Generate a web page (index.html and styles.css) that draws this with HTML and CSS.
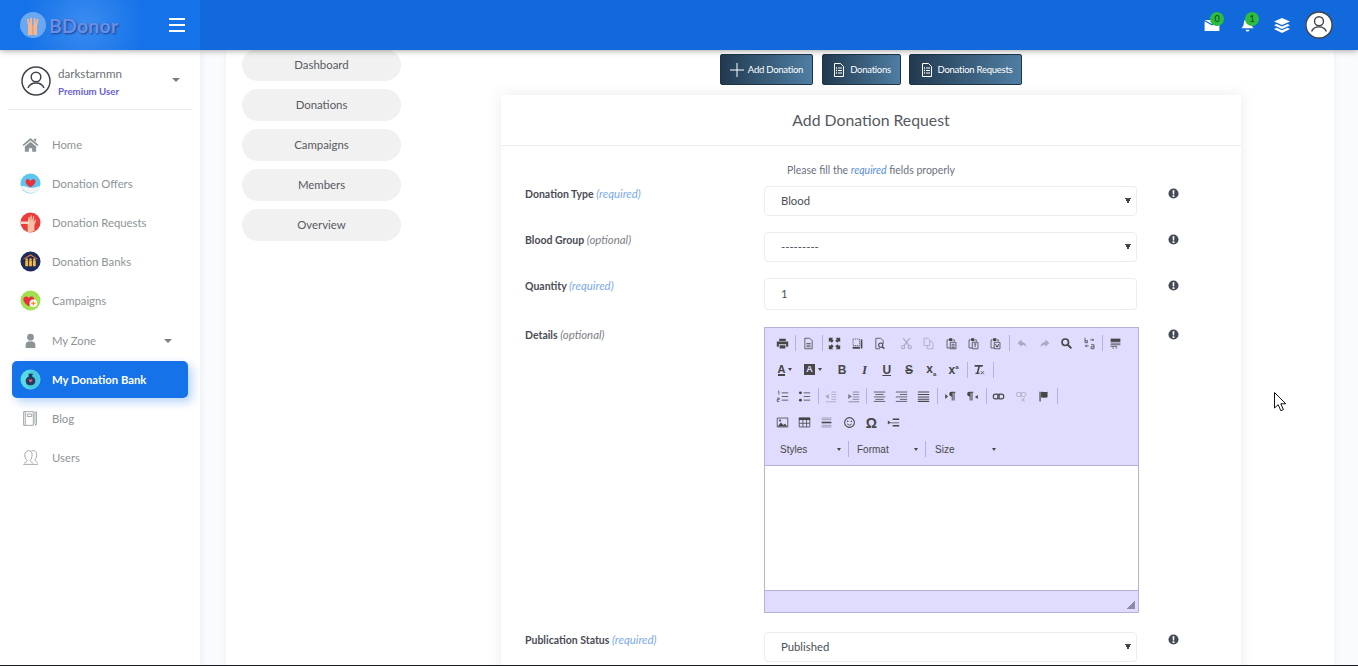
FILE: index.html
```html
<!DOCTYPE html>
<html lang="en">
<head>
  <meta charset="UTF-8" />
  <title>BDonor - Add Donation Request</title>
  <link rel="stylesheet" href="styles.css">
</head>
<body>
  <!-- toolbar icons for the editor -->
  <svg class="defs" width="0" height="0">
    <defs>
      <symbol id="i-print" viewBox="0 0 16 16"><path d="M4 2h8v3H4zM1 5.500h14V12h-2.500V9h-9v3H1zM4.500 10h7v4h-7z"/></symbol>
      <symbol id="i-doc" viewBox="0 0 16 16"><path fill="none" stroke="currentColor" d="M3.500 1.500h6l3 3v10h-9zM5.500 8h5M5.500 10h5M5.500 12h5"/></symbol>
      <symbol id="i-max" viewBox="0 0 16 16"><path d="M1 1h5.500L5 2.500 7 4.500 4.500 7 2.500 5 1 6.500zM15 1v5.500L13.500 5l-2 2L9 4.500l2-2L9.500 1zM1 15V9.500L2.500 11l2-2L7 11.500l-2 2L6.500 15zM15 15H9.500l1.500-1.500-2-2L11.500 9l2 2L15 9.500z"/></symbol>
      <symbol id="i-blocks" viewBox="0 0 16 16"><path fill="none" stroke="currentColor" stroke-dasharray="1.500 1" d="M2.500 2.500h8v8h-8z"/><path d="M2 12h9v2.500H2zM12 3h2v11h-2z"/></symbol>
      <symbol id="i-preview" viewBox="0 0 16 16"><path fill="none" stroke="currentColor" d="M3.500 1.500h6l3 3v4M3.500 1.500v13h5"/><circle cx="9.500" cy="10" r="2.500" fill="none" stroke="currentColor" stroke-width="1.300"/><path stroke="currentColor" stroke-width="1.600" d="M11.500 12l2.500 2.500"/></symbol>
      <symbol id="i-cut" viewBox="0 0 16 16"><path stroke="currentColor" stroke-width="1.400" fill="none" d="M4 1.500l7 9M12 1.500l-7 9"/><circle cx="4" cy="12.500" r="2" fill="none" stroke="currentColor" stroke-width="1.300"/><circle cx="12" cy="12.500" r="2" fill="none" stroke="currentColor" stroke-width="1.300"/></symbol>
      <symbol id="i-copy" viewBox="0 0 16 16"><path fill="none" stroke="currentColor" d="M2.500 1.500h5l2 2v7h-7zM9.500 5.500h2l2 2v7h-7v-4"/></symbol>
      <symbol id="i-paste" viewBox="0 0 16 16"><path fill="none" stroke="currentColor" d="M2.500 3.500h2M9.500 3.500h2v2M2.500 3.500v10h4"/><path d="M5 1.500h4V5H5z"/><path fill="none" stroke="currentColor" d="M6.500 6.500h7v8h-7zM8 9h4M8 11h4M8 13h4"/></symbol>
      <symbol id="i-pastetext" viewBox="0 0 16 16"><path fill="none" stroke="currentColor" d="M2.500 3.500h2M9.500 3.500h2v2M2.500 3.500v10h4"/><path d="M5 1.500h4V5H5z"/><path fill="none" stroke="currentColor" d="M6.500 6.500h7v8h-7zM8.500 8.500h3M10 8.500v4"/></symbol>
      <symbol id="i-pasteword" viewBox="0 0 16 16"><path fill="none" stroke="currentColor" d="M2.500 3.500h2M9.500 3.500h2v2M2.500 3.500v10h4"/><path d="M5 1.500h4V5H5z"/><path fill="none" stroke="currentColor" d="M6.500 6.500h7v8h-7zM8 8.500l1.500 4 .5-2 .5 2 1.500-4"/></symbol>
      <symbol id="i-undo" viewBox="0 0 16 16"><path d="M7 3L2 7.500 7 12V9.500c3 0 5 1 6 3.500 0-4-2-6.500-6-7z"/></symbol>
      <symbol id="i-redo" viewBox="0 0 16 16"><path d="M9 3l5 4.500L9 12V9.500c-3 0-5 1-6 3.500 0-4 2-6.500 6-7z"/></symbol>
      <symbol id="i-find" viewBox="0 0 16 16"><circle cx="6.500" cy="6.500" r="4" fill="none" stroke="currentColor" stroke-width="2"/><path stroke="currentColor" stroke-width="2.400" d="M9.500 9.500l4.500 4.500"/></symbol>
      <symbol id="i-replace" viewBox="0 0 16 16"><path fill="none" stroke="currentColor" d="M2.500 1v6M2.500 4.500h3v2.500h-3M9 3.500h4l-1.500-1.500M13 3.500l-1.500 1.500M7 11h-4l1.500-1.500M3 11l1.500 1.500M10 9.500h3.500v5H10v-2.500h3.500"/></symbol>
      <symbol id="i-template" viewBox="0 0 16 16"><path d="M2 2h12v4H2z"/><path stroke="currentColor" d="M2 7.500h12M2 9.500h12M2 11.500h8"/><path stroke="currentColor" d="M4 13.500h2M8 13.500h2"/></symbol>
      <symbol id="i-clear" viewBox="0 0 16 16"><path d="M2 2.500h10v2H8.500L6.500 12H8v1.500H3V12h1.500l2-7.500H2z"/><path stroke="currentColor" d="M9.500 10l4 4M13.500 10l-4 4"/></symbol>
      <symbol id="i-ol" viewBox="0 0 16 16"><path stroke="currentColor" d="M7 3.500h8M7 8h8M7 12.500h8M2.500 1.500h1v4M1.500 10h2.500v1.500H1.500V14H4" fill="none"/></symbol>
      <symbol id="i-ul" viewBox="0 0 16 16"><path stroke="currentColor" d="M7 3.500h8M7 8h8M7 12.500h8"/><circle cx="3" cy="3.500" r="1.800"/><circle cx="3" cy="12.500" r="1.800"/></symbol>
      <symbol id="i-outdent" viewBox="0 0 16 16"><path stroke="currentColor" d="M9 2.500h6M9 5.500h6M9 8.500h6M9 11.500h6M2 14.500h13"/><path d="M6 5v6L1.500 8z"/></symbol>
      <symbol id="i-indent" viewBox="0 0 16 16"><path stroke="currentColor" d="M7 2.500h8M7 5.500h8M7 8.500h8M7 11.500h8M2 14.500h13"/><path d="M1.500 5v6L6 8z"/></symbol>
      <symbol id="i-center" viewBox="0 0 16 16"><path stroke="currentColor" d="M1 2.500h14M3 5.500h10M1 8.500h14M3 11.500h10M1 14h14"/></symbol>
      <symbol id="i-right" viewBox="0 0 16 16"><path stroke="currentColor" d="M1 2.500h14M6 5.500h9M1 8.500h14M6 11.500h9M1 14h14"/></symbol>
      <symbol id="i-justify" viewBox="0 0 16 16"><path stroke="currentColor" stroke-width="1.300" d="M1 2.500h14M1 5.500h14M1 8.500h14M1 11.500h14M1 14h14"/></symbol>
      <symbol id="i-ltr" viewBox="0 0 16 16"><path d="M9 2h5v1.500h-1V13h-1.300V3.500h-1V13H9.500V8C7.500 8 6.500 7 6.500 5S7.500 2 9 2zM1.500 5L5 8l-3.500 3z"/></symbol>
      <symbol id="i-rtl" viewBox="0 0 16 16"><path d="M4 2h5v1.500H8V13H6.700V3.500h-1V13H4.500V8C2.500 8 1.500 7 1.500 5S2.500 2 4 2zM14.500 6v5L11 8.500z"/></symbol>
      <symbol id="i-link" viewBox="0 0 16 16"><rect x="1.500" y="5" width="7.500" height="6" rx="3" fill="none" stroke="currentColor" stroke-width="1.400"/><rect x="7" y="5" width="7.500" height="6" rx="3" fill="none" stroke="currentColor" stroke-width="1.400"/></symbol>
      <symbol id="i-unlink" viewBox="0 0 16 16"><rect x="1.500" y="3" width="6.500" height="5" rx="2.500" fill="none" stroke="currentColor"/><rect x="7" y="3" width="6.500" height="5" rx="2.500" fill="none" stroke="currentColor"/><path stroke="currentColor" d="M8 10l4 4.500M12 10l-4 4.500"/></symbol>
      <symbol id="i-flag" viewBox="0 0 16 16"><path d="M3 2h1.500v12H3zM5 2.500c3-1 4 1 8-.500v7c-4 1.500-5-.500-8 .500z"/></symbol>
      <symbol id="i-image" viewBox="0 0 16 16"><path fill="none" stroke="currentColor" d="M1.500 2.500h13v11h-13z"/><path d="M2 13l4-5 3 3 2-1.500 3 3.500z"/><circle cx="5" cy="5.500" r="1.300"/></symbol>
      <symbol id="i-table" viewBox="0 0 16 16"><path d="M1 2h14v3H1z"/><path fill="none" stroke="currentColor" d="M1.500 2.500h13v11h-13zM1.500 9h13M6 5v8.500M10.500 5v8.500"/></symbol>
      <symbol id="i-hr" viewBox="0 0 16 16"><path stroke="currentColor" stroke-width="1" opacity=".5" d="M2 2.500h12M2 4.500h12"/><path d="M2 7h12v2H2z"/><path stroke="currentColor" opacity=".5" d="M2 11.500h12M2 13.500h12"/></symbol>
      <symbol id="i-smile" viewBox="0 0 16 16"><circle cx="8" cy="8" r="6" fill="none" stroke="currentColor" stroke-width="1.300"/><circle cx="5.800" cy="6.500" r="1"/><circle cx="10.200" cy="6.500" r="1"/><path fill="none" stroke="currentColor" d="M5 9.500c1.500 2 4.500 2 6 0"/></symbol>
      <symbol id="i-break" viewBox="0 0 16 16"><path d="M7 3h8v2H7zM7 11h8v2H7zM4 8h11v1H4zM1 5.500L4.500 8 1 10.500z"/></symbol>
      <symbol id="i-info" viewBox="0 0 12 12"><circle cx="6" cy="6" r="5.500" fill="#444b57"/><path d="M5 2.500h2L6.700 7H5.300zM5 8h2v1.700H5z" fill="#fff"/></symbol>
      <symbol id="i-avatar" viewBox="0 0 30 30"><circle cx="15" cy="15" r="14" fill="#fff" stroke="#40444c" stroke-width="1.500"/><circle cx="15" cy="11" r="4.800" fill="none" stroke="#40444c" stroke-width="1.500"/><path d="M7 22c1.500-3.500 4-5 8-5s6.500 1.500 8 5" fill="none" stroke="#40444c" stroke-width="1.500"/></symbol>
      <symbol id="i-lines" viewBox="0 0 16 16"><path fill="none" stroke="#fff" d="M3.500 1.500h6l3 3v10h-9z"/><path stroke="#fff" d="M7 6h4M7 8.500h4M7 11h4"/><path stroke="#fff" stroke-width="1.500" d="M5 6h1M5 8.500h1M5 11h1"/></symbol>
    </defs>
  </svg>

  <div class="app">
    <header class="topbar">
      <div class="brand">
        <svg class="brand-mark" viewBox="0 0 26 26">
          <circle cx="13" cy="13" r="13" fill="#6aa8f2"/>
          <path d="M8 23V14L7 7h1.800L10 12V6h2v7h1.600V6h2v6l1.200-5h1.800l-1.600 7v9z" fill="#f2b690"/>
          <path d="M12.800 13v10" stroke="#dd8a5f" stroke-width=".8"/>
        </svg>
        <span class="brand-name">BDonor</span>
        <span class="burger"><i></i><i></i><i></i></span>
      </div>
      <div class="topbar-right">
        <span class="top-icon">
          <svg viewBox="0 0 16 13" width="16" height="12"><path d="M0 2.500L8 7l8-4.500V13H0zM0 1h16L8 5.500z" fill="#fff"/></svg>
          <b class="count">0</b>
        </span>
        <span class="top-icon">
          <svg viewBox="0 0 16 15" width="15" height="14"><path d="M8 1c3 0 4 2.500 4 5 0 2 1 3.500 2.500 5h-13C3 9.500 4 8 4 6c0-2.500 1-5 4-5zM6 12.500h4a2 2 0 0 1-4 0z" fill="#fff"/></svg>
          <b class="count">1</b>
        </span>
        <span class="top-icon">
          <svg viewBox="0 0 16 15" width="16" height="15"><path d="M8 0l8 3.500L8 7 0 3.500zM2.500 6L8 8.500 13.500 6 16 7.300 8 11 0 7.300zM2.500 9.800L8 12.300l5.500-2.500 2.500 1.300L8 15l-8-3.900z" fill="#fff"/></svg>
        </span>
        <svg class="top-avatar"><use href="#i-avatar"/></svg>
      </div>
    </header>

    <div class="page">
      <aside class="sidebar">
        <div class="user-box">
          <svg class="user-avatar"><use href="#i-avatar"/></svg>
          <div class="user-text">
            <span class="user-name">darkstarnmn</span>
            <span class="user-level">Premium User</span>
          </div>
          <span class="caret user-caret"></span>
        </div>

        <nav class="side-nav">
          <a class="side-item">
            <svg class="side-icon" viewBox="-2 -2 26 26"><path d="M11 3l10 8.500-1.500 1.500L11 6 2.500 13 1 11.500zM4 13.500L11 7.500l7 6V20h-5v-4.500H9V20H4zM15 4h3v4l-3-2.500z" fill="#8d9498"/></svg>
            <span>Home</span>
          </a>
          <a class="side-item">
            <svg class="side-icon" viewBox="0 0 22 22"><circle cx="11" cy="11" r="10.500" fill="#5cc6ee"/><path d="M11 15C6 11.500 5.500 9.500 6 8c.7-2 3.800-2 5 .3C12.200 6 15.300 6 16 8c.5 1.500 0 3.500-5 7z" fill="#e8303f"/><path d="M1 14c4-1 6 1 9 1.500 3 .3 6-.5 11-2-1 4-5 7.500-10 7.500-4.500 0-8-3-10-7z" fill="#f4f4f4"/></svg>
            <span>Donation Offers</span>
          </a>
          <a class="side-item">
            <svg class="side-icon" viewBox="0 0 22 22"><circle cx="11" cy="11" r="10.500" fill="#ec3b3b"/><path d="M8 21V11L9 5l1.200.2L10.500 10l.7-6.500 1.300.2V10l1.200-5.500 1.300.3-.7 6 1.800-3 1 .6-2 5.500V20a11 11 0 0 1-7.100 1z" fill="#f5c1a3"/><path d="M0.500 10h9v2.500h-9z" fill="#f5dcd0"/></svg>
            <span>Donation Requests</span>
          </a>
          <a class="side-item">
            <svg class="side-icon" viewBox="0 0 22 22"><circle cx="11" cy="11" r="10.500" fill="#1d2a5c"/><path d="M3.500 8L11 3.500 18.500 8v1L11 5 3.500 9z" fill="#e5773a"/><path d="M5.500 10h3v6h-3zM9.500 10h3v6h-3zM13.500 10h3v6h-3z" fill="#f6b93b"/><circle cx="7" cy="9" r="1.300" fill="#f6b93b"/><circle cx="11" cy="9" r="1.300" fill="#f6b93b"/><circle cx="15" cy="9" r="1.300" fill="#f6b93b"/></svg>
            <span>Donation Banks</span>
          </a>
          <a class="side-item">
            <svg class="side-icon" viewBox="0 0 22 22"><circle cx="11" cy="11" r="10.500" fill="#a2e04f"/><path d="M9 17C3 12.500 3 9.500 4 8c1.500-2 4.300-1.500 5 .5C10 6.500 13 6 14.500 8c1 1.500.5 4.500-5.500 9z" fill="#e8303f"/><circle cx="14" cy="14" r="4" fill="#fff"/><path d="M13.300 11.700h1.400v1.600h1.600v1.400h-1.600v1.600h-1.400v-1.600h-1.600v-1.400h1.600z" fill="#f0932b"/></svg>
            <span>Campaigns</span>
          </a>
          <a class="side-item side-zone">
            <svg class="side-icon" viewBox="-3 -3 28 28"><circle cx="11" cy="6.500" r="4.500" fill="#8d9498"/><path d="M4.500 21v-4c0-3 2-5 6.500-5s6.500 2 6.500 5v4z" fill="#8d9498"/></svg>
            <span>My Zone</span>
            <span class="caret zone-caret"></span>
          </a>
          <a class="side-item side-active">
            <svg class="side-icon" viewBox="0 0 22 22"><circle cx="11" cy="11" r="10.500" fill="#58dbe6"/><path d="M11 1a10 10 0 0 1 0 20l-5-4z" fill="#3fb9dc" opacity=".6"/><path d="M8.500 5h5l-1 2.500c2.500 1 3.500 3 3.500 5 0 3-2 4.500-5 4.500s-5-1.500-5-4.500c0-2 1-4 3.500-5z" fill="#243a5e"/><path d="M11 14c-2-1.500-2.200-2.500-1.800-3 .5-.6 1.400-.4 1.800.4.400-.8 1.300-1 1.800-.4.400.5.200 1.500-1.800 3z" fill="#ef5a6f"/></svg>
            <span>My Donation Bank</span>
          </a>
          <a class="side-item">
            <svg class="side-icon" viewBox="-2 -2 26 26"><path d="M2.500 2.500h12v17h-12zM4.500 2.500v17M7 5.500h5.500v3H7zM16.500 3h2v14l-1 2.500-1-2.500z" fill="none" stroke="#8d9498"/></svg>
            <span>Blog</span>
          </a>
          <a class="side-item">
            <svg class="side-icon" viewBox="-2 -2 26 26"><path d="M2 19.500h18M3 18c2.500-1 3.500-2 4-3-2-2-3.500-5-3-8 .5-3 2.500-4.500 4.500-4.500S13 4 13 7c0 3-1 6-2.500 8 .5 1 2 2 3.500 3M12 3c3-1.500 6 0 6.500 3 .5 3-.5 6-2 8 .5 1 2 2.500 3.500 4" fill="none" stroke="#8d9498"/></svg>
            <span>Users</span>
          </a>
        </nav>
      </aside>

      <main class="content">
        <div class="panel">
          <div class="pill-list">
            <a class="pill">Dashboard</a>
            <a class="pill">Donations</a>
            <a class="pill">Campaigns</a>
            <a class="pill">Members</a>
            <a class="pill">Overview</a>
          </div>

          <div class="center-col">
            <div class="action-row">
              <a class="action-btn btn-add"><svg viewBox="0 0 14 14" width="14" height="14"><path d="M7 0v14M0 7h14" stroke="#fff"/></svg>Add Donation</a>
              <a class="action-btn btn-list"><svg width="16" height="16"><use href="#i-lines"/></svg>Donations</a>
              <a class="action-btn btn-req"><svg width="16" height="16"><use href="#i-lines"/></svg>Donation Requests</a>
            </div>

            <section class="card">
              <h2 class="card-title">Add Donation Request</h2>
              <div class="card-body">
                <p class="form-hint">Please fill the <em>required</em> fields properly</p>
                <form class="form-grid">
                  <label class="form-label">Donation Type <em>(required)</em></label>
                  <select class="field"><option>Blood</option></select>
                  <svg class="info-icon"><use href="#i-info"/></svg>

                  <label class="form-label">Blood Group <em class="opt">(optional)</em></label>
                  <select class="field"><option>---------</option></select>
                  <svg class="info-icon"><use href="#i-info"/></svg>

                  <label class="form-label">Quantity <em>(required)</em></label>
                  <input class="field field-num" type="text" value="1">
                  <svg class="info-icon"><use href="#i-info"/></svg>

                  <label class="form-label row-details">Details <em class="opt">(optional)</em></label>
                  <div class="editor row-details">
                    <div class="editor-tools">
                      <div class="tool-row">
                        <span class="tool"><svg><use href="#i-print"/></svg></span><i class="sep"></i>
                        <span class="tool"><svg><use href="#i-doc"/></svg></span><i class="sep"></i>
                        <span class="tool"><svg><use href="#i-max"/></svg></span>
                        <span class="tool"><svg><use href="#i-blocks"/></svg></span>
                        <span class="tool"><svg><use href="#i-preview"/></svg></span>
                        <span class="tool tool-off tool-gap"><svg><use href="#i-cut"/></svg></span>
                        <span class="tool tool-off"><svg><use href="#i-copy"/></svg></span>
                        <span class="tool"><svg><use href="#i-paste"/></svg></span>
                        <span class="tool"><svg><use href="#i-pastetext"/></svg></span>
                        <span class="tool"><svg><use href="#i-pasteword"/></svg></span><i class="sep"></i>
                        <span class="tool tool-off"><svg><use href="#i-undo"/></svg></span>
                        <span class="tool tool-off"><svg><use href="#i-redo"/></svg></span>
                        <span class="tool"><svg><use href="#i-find"/></svg></span>
                        <span class="tool"><svg><use href="#i-replace"/></svg></span><i class="sep"></i>
                        <span class="tool"><svg><use href="#i-template"/></svg></span>
                      </div>
                      <div class="tool-row">
                        <span class="tool tool-color"><span class="letter-a">A</span><i class="mini-caret"></i></span>
                        <span class="tool tool-color"><span class="letter-bg">A</span><i class="mini-caret"></i></span>
                        <span class="tool tool-gap-sm"><b class="glyph">B</b></span>
                        <span class="tool"><b class="glyph glyph-i">I</b></span>
                        <span class="tool"><b class="glyph glyph-u">U</b></span>
                        <span class="tool"><b class="glyph glyph-s">S</b></span>
                        <span class="tool"><b class="glyph">x<sub>a</sub></b></span>
                        <span class="tool"><b class="glyph">x<sup>a</sup></b></span><i class="sep"></i>
                        <span class="tool"><svg><use href="#i-clear"/></svg></span><i class="sep"></i>
                      </div>
                      <div class="tool-row">
                        <span class="tool"><svg><use href="#i-ol"/></svg></span>
                        <span class="tool"><svg><use href="#i-ul"/></svg></span><i class="sep"></i>
                        <span class="tool tool-off"><svg><use href="#i-outdent"/></svg></span>
                        <span class="tool tool-soft"><svg><use href="#i-indent"/></svg></span><i class="sep"></i>
                        <span class="tool"><svg><use href="#i-center"/></svg></span>
                        <span class="tool"><svg><use href="#i-right"/></svg></span>
                        <span class="tool"><svg><use href="#i-justify"/></svg></span><i class="sep"></i>
                        <span class="tool"><svg><use href="#i-ltr"/></svg></span>
                        <span class="tool"><svg><use href="#i-rtl"/></svg></span><i class="sep"></i>
                        <span class="tool"><svg><use href="#i-link"/></svg></span>
                        <span class="tool tool-off"><svg><use href="#i-unlink"/></svg></span>
                        <span class="tool"><svg><use href="#i-flag"/></svg></span><i class="sep"></i>
                      </div>
                      <div class="tool-row">
                        <span class="tool"><svg><use href="#i-image"/></svg></span>
                        <span class="tool"><svg><use href="#i-table"/></svg></span>
                        <span class="tool"><svg><use href="#i-hr"/></svg></span>
                        <span class="tool"><svg><use href="#i-smile"/></svg></span>
                        <span class="tool"><b class="glyph glyph-om">Ω</b></span>
                        <span class="tool"><svg><use href="#i-break"/></svg></span>
                      </div>
                      <div class="tool-row tool-row-combo">
                        <span class="combo">Styles<i class="mini-caret"></i></span><i class="sep"></i>
                        <span class="combo">Format<i class="mini-caret"></i></span><i class="sep"></i>
                        <span class="combo">Size<i class="mini-caret"></i></span>
                      </div>
                    </div>
                    <div class="editor-area"></div>
                    <div class="editor-foot"><i class="resize-grip"></i></div>
                  </div>
                  <svg class="info-icon row-details"><use href="#i-info"/></svg>

                  <label class="form-label row-status">Publication Status <em>(required)</em></label>
                  <select class="field row-status"><option>Published</option></select>
                  <svg class="info-icon row-status"><use href="#i-info"/></svg>
                </form>
              </div>
            </section>
          </div>
        </div>
      </main>
    </div>
  </div>

  <svg class="mouse-cursor" viewBox="0 0 13 20" width="13" height="20"><path d="M.500.500v15.500l3.700-3.300 2.600 6 2.600-1.100-2.600-5.800h5z" fill="#fff" stroke="#111"/></svg>
  <div class="screen-edge"></div>
</body>
</html>
```

FILE: styles.css
```css
* {
  box-sizing: border-box;
}

html, body {
  margin: 0;
  height: 100%;
  overflow: hidden;
}

body {
  font-family: Lato, 'Open Sans', sans-serif;
  font-size: 11.400px;
  color: #575962;
  background-color: #f9fbfd;
}

.defs {
  position: absolute;
}

.app {
  display: flex;
  flex-direction: column;
  height: 100vh;
  overflow: hidden;
}

/* top bar */
.topbar {
  display: flex;
  justify-content: space-between;
  flex: 0 0 50px;
  background-color: #1269db;
  box-shadow: 0 1px 6px rgba(0,0,0,0.35);
  position: relative;
  z-index: 5;
}

.brand {
  display: flex;
  align-items: center;
  width: 200px;
  padding-left: 20px;
  background: radial-gradient(circle at 85px 24px, #3b8cf0 0, #1572e8 60px);
}

.brand-mark {
  width: 26px;
  height: 26px;
}

.brand-name {
  margin-left: 3px;
  font-size: 19.500px;
  font-weight: 700;
  letter-spacing: 0.2px;
  color: #6a8fe4;
  text-shadow: 1px 1px 2px #1c3f90;
}

.burger {
  display: flex;
  flex-direction: column;
  gap: 4px;
  margin-left: auto;
  margin-right: 15px;
  width: 16px;
}

.burger i {
  height: 2px;
  background: #fff;
}

.topbar-right {
  display: flex;
  align-items: center;
  padding-right: 25px;
}

.top-icon {
  display: flex;
  align-items: center;
  justify-content: center;
  position: relative;
  width: 16px;
  height: 16px;
  margin-right: 19px;
}

.top-icon:nth-child(3) {
  margin-right: 15px;
}

.count {
  position: absolute;
  top: -5px;
  right: -4px;
  width: 14px;
  height: 14px;
  line-height: 14px;
  border-radius: 50%;
  background: #2bbd3d;
  color: #22352a;
  font-size: 9px;
  font-weight: 400;
  text-align: center;
}

.top-avatar {
  width: 28px;
  height: 28px;
}

/* left side */
.page {
  display: flex;
  flex: 1;
  min-height: 0;
}

.sidebar {
  flex: 0 0 200px;
  background-color: #fff;
  box-shadow: 2px 0 6px rgba(200,205,215,0.2);
  position: relative;
  z-index: 2;
}

.user-box {
  display: flex;
  align-items: center;
  height: 60px;
  margin: 0 8px;
  padding: 2px 0 0 13px;
  border-bottom: 1px solid #ebecec;
}

.user-avatar {
  width: 30px;
  height: 30px;
  flex: none;
}

.user-text {
  display: flex;
  flex-direction: column;
  gap: 5px;
  margin: 2px 0 0 7px;
}

.user-name {
  color: #6b6f75;
  font-size: 11.600px;
}

.user-level {
  color: #6861ce;
  font-size: 9.700px;
  font-weight: 700;
}

.caret {
  width: 0;
  height: 0;
  border-left: 4px solid transparent;
  border-right: 4px solid transparent;
  border-top: 4px solid #7b7f85;
}

.user-caret {
  margin: -2px 12px 0 auto;
}

.side-nav {
  display: flex;
  flex-direction: column;
  padding-top: 15px;
}

.side-item {
  display: flex;
  align-items: center;
  height: 39px;
  margin: 0 12px;
  padding-left: 8px;
  color: #8d9498;
  font-size: 11.300px;
}

.side-icon {
  flex: none;
  width: 21px;
  height: 21px;
  margin-right: 11px;
}

.side-zone {
  height: 41px;
}

.zone-caret {
  margin-left: auto;
  margin-right: 16px;
}

.side-active {
  height: 37px;
  margin-bottom: 1px;
  border-radius: 5px;
  background-color: #1572e8;
  color: #fff;
  font-weight: 700;
  box-shadow: 4px 4px 10px rgba(21,114,232,0.3);
}

/* main part */
.content {
  flex: 1;
  min-width: 0;
  padding: 0 24px 0 26px;
}

.panel {
  display: flex;
  height: 100%;
  background-color: #fff;
  box-shadow: 0 0 4px rgba(200,205,215,0.3);
}

.pill-list {
  display: flex;
  flex-direction: column;
  gap: 8px;
  flex: 0 0 159px;
  margin: -1px 0 0 16px;
}

.pill {
  height: 32px;
  line-height: 32px;
  border-radius: 16px;
  background-color: #f1f1f1;
  color: #575962;
  text-align: center;
}

.center-col {
  flex: 0 0 740px;
  margin-left: 100px;
  padding-top: 4px;
}

.action-row {
  display: flex;
  justify-content: center;
  gap: 8.500px;
  height: 31px;
  margin-bottom: 10px;
}

.action-btn {
  display: flex;
  align-items: center;
  justify-content: center;
  gap: 3px;
  border: 1px solid #1d3346;
  border-radius: 2px;
  background: linear-gradient(90deg, #223a50, #4f7ea3);
  color: #fff;
  font-size: 9.500px;
  letter-spacing: -0.25px;
}

.btn-add {
  width: 93px;
  gap: 4px;
}

.btn-list {
  width: 79px;
}

.btn-req {
  width: 113px;
}

.card {
  background-color: #fff;
  box-shadow: 0 0 14px rgba(60,70,90,0.1);
  height: 700px;
}

.card-title {
  margin: 0;
  height: 51px;
  line-height: 50px;
  border-bottom: 1px solid #ebecec;
  color: #575962;
  font-size: 15.800px;
  font-weight: 400;
  text-align: center;
}

.card-body {
  padding: 18px 0 0 24px;
}

.form-hint {
  margin: 0 0 10px;
  height: 12px;
  line-height: 12px;
  padding-left: 262px;
  color: #6b7280;
  font-size: 10.500px;
}

.form-hint em {
  color: #5a8fd8;
}

.form-grid {
  display: grid;
  grid-template-columns: 239px 373px 12px;
  column-gap: 0;
  row-gap: 16px;
  align-items: start;
}

.form-label {
  padding-top: 1px;
  color: #4a4d55;
  font-size: 10.500px;
  font-weight: 700;
}

.form-label em {
  color: #7aa9ee;
  font-weight: 400;
  font-size: 11.400px;
}

.form-label em.opt {
  color: #7d8087;
}

.field {
  display: block;
  width: 100%;
  height: 30px;
  padding: 0 15px 1px 16px;
  border: 1px solid #ebedf2;
  border-radius: 4px;
  background-color: #fff;
  color: #495057;
  font: 11.300px Lato, sans-serif;
}

select.field {
  appearance: none;
  background-image: linear-gradient(to bottom left, #444 50%, transparent 50%), linear-gradient(to bottom right, #444 50%, transparent 50%);
  background-size: 3px 6px;
  background-repeat: no-repeat;
  background-position: right 8px top 11px, right 5px top 11px;
}

.field-num {
  height: 32px;
  padding-bottom: 2px;
}

.info-icon {
  width: 11px;
  height: 11px;
  margin: 2px 0 0 31px;
  overflow: visible;
}

.row-details {
  margin-top: 1px;
}

.info-icon.row-details {
  margin-top: 3px;
}

.row-status {
  margin-top: 3px;
}

.info-icon.row-status {
  margin-top: 5px;
}

/* editor */
.editor {
  width: 375px;
  height: 286px;
  display: flex;
  flex-direction: column;
  border: 1px solid #b6b1d6;
  background-color: #e0dcff;
}

.editor-tools {
  height: 138px;
  padding: 2px 0 0 6px;
  border-bottom: 1px solid #b6b1d6;
}

.tool-row {
  display: flex;
  align-items: center;
  height: 26.500px;
}

.tool {
  display: flex;
  align-items: center;
  justify-content: center;
  flex: none;
  width: 22.300px;
  height: 20px;
  color: #474747;
}

.tool svg {
  width: 13px;
  height: 13px;
  fill: currentColor;
}

.tool-off {
  opacity: 0.35;
}

.tool-soft {
  opacity: 0.65;
}

.tool-gap {
  margin-left: 5px;
}

.tool-gap-sm {
  margin-left: 4px;
}

.tool-color {
  width: 28px;
  gap: 3px;
}

.sep {
  flex: none;
  width: 1px;
  height: 16px;
  margin: 0 1px 0 2px;
  background-color: #b6b1d6;
}

.glyph {
  font-family: 'Liberation Sans', sans-serif;
  font-size: 12px;
  color: #474747;
  line-height: 1;
}

.glyph sub, .glyph sup {
  font-size: 6px;
}

.glyph-i {
  font-style: italic;
  font-family: 'Liberation Serif', serif;
  font-size: 13px;
}

.glyph-u {
  text-decoration: underline;
}

.glyph-s {
  text-decoration: line-through;
}

.glyph-om {
  font-size: 14px;
}

.letter-a {
  font: 700 11px 'Liberation Sans', sans-serif;
  border-bottom: 2px solid #474747;
  line-height: 10px;
}

.letter-bg {
  font: 700 9px 'Liberation Sans', sans-serif;
  background-color: #474747;
  color: #e0dcff;
  padding: 0 2px;
  line-height: 11px;
}

.mini-caret {
  display: inline-block;
  width: 0;
  height: 0;
  border-left: 2.500px solid transparent;
  border-right: 2.500px solid transparent;
  border-top: 3px solid #474747;
}

.combo {
  display: flex;
  align-items: center;
  justify-content: space-between;
  flex: none;
  width: 61px;
  color: #474747;
  font: 10px 'Liberation Sans', sans-serif;
}

.tool-row-combo .sep {
  margin: 0 8px 0 7px;
}

.tool-row-combo .sep:nth-child(4) {
  margin-right: 9px;
}

.tool-row-combo .combo:first-child {
  margin-left: 9px;
}

.editor-area {
  flex: 1;
  background-color: #fff;
  border-bottom: 1px solid #b6b1d6;
}

.editor-foot {
  display: flex;
  justify-content: flex-end;
  align-items: flex-end;
  height: 21px;
  padding: 0 3px 3px 0;
}

.resize-grip {
  width: 8px;
  height: 8px;
  background: linear-gradient(135deg, transparent 50%, #8f8ba5 50%);
}

/* things lying over the page */
.mouse-cursor {
  position: absolute;
  left: 1274px;
  top: 392px;
  z-index: 9;
}

.screen-edge {
  position: fixed;
  left: 0;
  right: 0;
  bottom: 0;
  height: 1px;
  background-color: #16181c;
  z-index: 9;
}
```
